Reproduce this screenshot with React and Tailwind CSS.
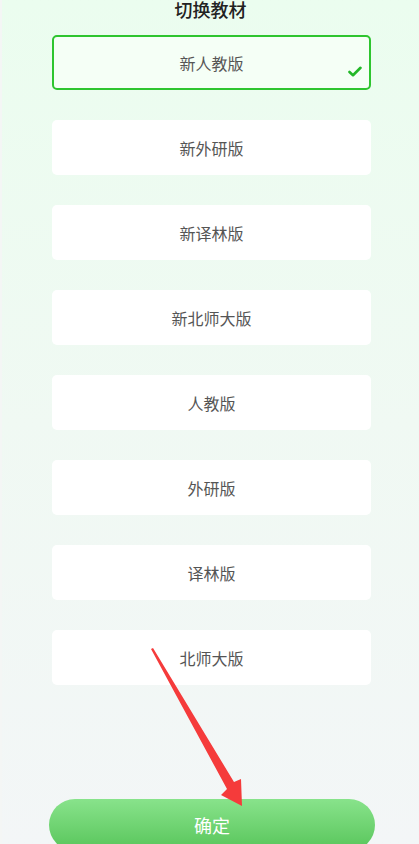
import { useState } from 'react';

const books = ['新人教版', '新外研版', '新译林版', '新北师大版', '人教版', '外研版', '译林版', '北师大版'];

export default function App() {
  const [selected, setSelected] = useState(0);

  return (
    <div
      className="relative h-[844px] w-[419px] overflow-hidden border-l-2 border-[#f4f6f5] bg-gradient-to-b from-[#ebfdef] via-[#f0f9f3] to-[#f3f6f7]"
      style={{ fontFamily: '"Noto Sans CJK SC", "Noto Sans", sans-serif' }}
    >
      <h1 className="text-center text-[18px] leading-[19px] font-medium text-[#222]">切换教材</h1>

      <div className="mt-[16px] flex flex-col gap-[30px] pl-[50px] pr-[48px]">
        {books.map((name, i) => (
          <button
            key={name}
            onClick={() => setSelected(i)}
            className={
              i === selected
                ? 'relative flex h-[55px] items-center justify-center rounded-[5px] border-2 border-[#2ec52f] bg-[#f5fff6] text-[16px] text-[#555]'
                : 'relative flex h-[55px] items-center justify-center rounded-[5px] bg-white text-[16px] text-[#555]'
            }
          >
            {name}
            {i === selected && (
              <svg className="absolute right-[7px] bottom-[11px]" width="14" height="11" viewBox="0 0 14 11">
                <path d="M1.5 6 L5 9.2 L12.5 1.8" fill="none" stroke="#22b828" strokeWidth="2.6" strokeLinecap="round" strokeLinejoin="round" />
              </svg>
            )}
          </button>
        ))}
      </div>

      <div className="mt-[114px] pl-[47px] pr-[44px]">
        <button className="h-[52px] w-full rounded-full bg-gradient-to-b from-[#88e38b] to-[#57c55a] text-[18px] text-white">
          确定
        </button>
      </div>

      <svg className="pointer-events-none absolute left-0 top-0" width="419" height="844">
        <polygon points="149,649 151,648 232,782 239,779 240,806 219,795 225,789" fill="#f53b3b" />
      </svg>
    </div>
  );
}
